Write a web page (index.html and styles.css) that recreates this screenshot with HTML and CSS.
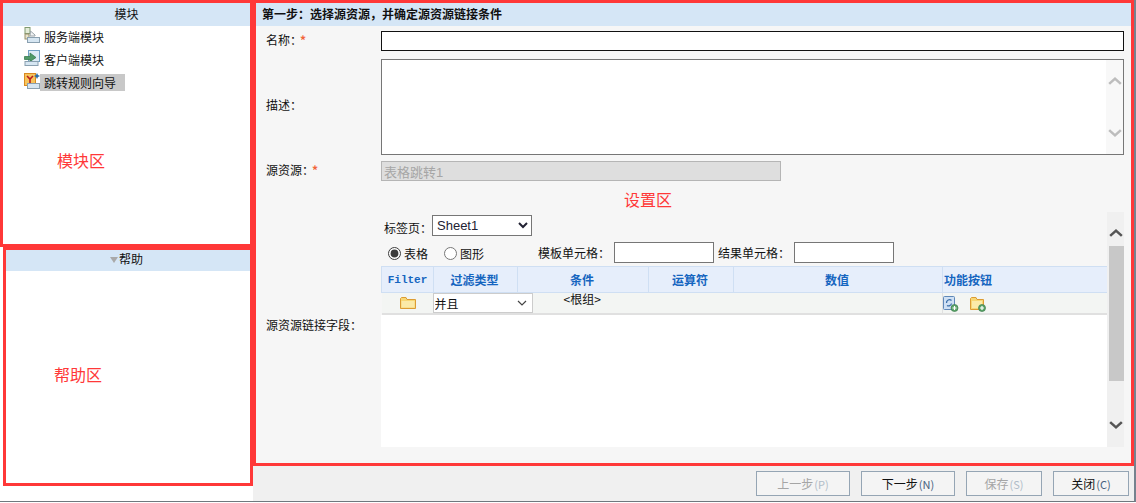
FILE: index.html
```html
<!DOCTYPE html>
<html lang="zh">
<head>
<meta charset="utf-8">
<title>跳转规则向导</title>
<link rel="stylesheet" href="styles.css">
</head>
<body>
<div class="app">
  <aside class="side">
    <section class="box module-box">
      <div class="head head-center">模块</div>
      <ul class="tree">
        <li class="tree-item">
          <svg class="tree-icon" viewBox="0 0 16 16"><rect x="1" y="0.500" width="5" height="6" fill="#e4ecd8" stroke="#7f9a70"/><rect x="1" y="7" width="4" height="5" fill="#e8e4cc" stroke="#98906a"/><path d="M6.500 4 L11 8 V9 H6Z" fill="#f1f3f4" stroke="#9aa4aa"/><rect x="3.500" y="10.500" width="12" height="5" fill="#d6e6f2" stroke="#8aa0b0"/></svg>
          <span class="tree-label">服务端模块</span>
        </li>
        <li class="tree-item">
          <svg class="tree-icon" viewBox="0 0 16 16"><rect x="4.500" y="0.500" width="11" height="11" fill="#dcebf6" stroke="#6fa0c4"/><path d="M0.500 6.500 H6 V3 L12 7.500 L6 11.500 V9.500 H0.500Z" fill="#4f9a68" stroke="#3a7c50" stroke-width="0.800"/><rect x="1" y="11.500" width="13" height="4" fill="#d6e6f2" stroke="#8aa0b0"/></svg>
          <span class="tree-label">客户端模块</span>
        </li>
        <li class="tree-item">
          <svg class="tree-icon" viewBox="0 0 16 16"><rect x="0.500" y="0.500" width="11" height="12" fill="#f6c45c" stroke="#d98a20"/><path d="M3 3 L6 6 L9 3 M6 6 V10" fill="none" stroke="#b81e1e" stroke-width="1.600"/><path d="M13 0 L14 2 L16 3 L14 4 L13 6 L12 4 L10 3 L12 2Z" fill="#2a6ea8"/><rect x="3.500" y="10.500" width="12" height="5" fill="#d6e6f2" stroke="#8aa0b0"/></svg>
          <span class="tree-label tree-label-active">跳转规则向导</span>
        </li>
      </ul>
      <div class="zone-note module-note">模块区</div>
    </section>
    <section class="box help-box">
      <div class="head head-center head-help"><span class="help-caret"></span>帮助</div>
      <div class="zone-note help-note">帮助区</div>
    </section>
  </aside>

  <div class="main">
    <section class="box main-box">
      <div class="head head-title">第一步：选择源资源，并确定源资源链接条件</div>
      <div class="form">
        <div class="row row-name">
          <label class="row-label">名称：<span class="req">*</span></label>
          <input class="field field-name" type="text">
        </div>
        <div class="row row-desc">
          <label class="row-label row-label-desc">描述：</label>
          <div class="field-area">
            <div class="area-scroll">
              <svg class="chev chev-light" viewBox="0 0 12 8"><path d="M1 6.500 L6 2 L11 6.500" fill="none" stroke="currentColor" stroke-width="2.200"/></svg>
              <svg class="chev chev-light" viewBox="0 0 12 8"><path d="M1 1.500 L6 6 L11 1.500" fill="none" stroke="currentColor" stroke-width="2.200"/></svg>
            </div>
          </div>
        </div>
        <div class="row row-source">
          <label class="row-label">源资源：<span class="req">*</span></label>
          <input class="field field-source" type="text" value="表格跳转1" disabled>
        </div>
        <div class="settings-note">设置区</div>
        <div class="row row-link">
          <label class="row-label row-label-link">源资源链接字段：</label>
          <div class="link-pane">
            <div class="link-content">
              <div class="sheet-row">
                <span class="sheet-label">标签页：</span>
                <select class="sheet-select"><option>Sheet1</option></select>
              </div>
              <div class="cell-row">
                <label class="radio radio-table"><input type="radio" name="kind" checked>表格</label>
                <label class="radio radio-chart"><input type="radio" name="kind">图形</label>
                <span class="cell-label">模板单元格：</span>
                <input class="cell-input" type="text">
                <span class="cell-label cell-label-result">结果单元格：</span>
                <input class="cell-input" type="text">
              </div>
              <table class="grid">
                <colgroup>
                  <col class="c-filter"><col class="c-type"><col class="c-cond"><col class="c-op"><col class="c-val"><col class="c-act">
                </colgroup>
                <thead>
                  <tr>
                    <th class="th-filter">Filter</th>
                    <th>过滤类型</th>
                    <th>条件</th>
                    <th>运算符</th>
                    <th>数值</th>
                    <th class="th-action">功能按钮</th>
                  </tr>
                </thead>
                <tbody>
                  <tr>
                    <td class="td-center">
                      <svg class="folder" viewBox="0 0 16 14"><path d="M0.500 2.500 V12.500 H15.500 V3.500 H7 L6 1.500 H1.500Z" fill="#f7d775" stroke="#dc9c34"/><rect x="1.500" y="5" width="13" height="6.500" fill="#fbeaa8"/></svg>
                    </td>
                    <td class="td-select"><select class="type-select"><option>并且</option></select></td>
                    <td class="td-root">&lt;根组&gt;</td>
                    <td></td>
                    <td></td>
                    <td class="td-actions">
                      <svg class="action-icon" viewBox="0 0 16 16"><rect x="0.500" y="0.500" width="11" height="13" rx="1" fill="#cfe0f4" stroke="#5f88b8"/><path d="M3.500 7 A3 3 0 0 1 8.500 4.500 M8.500 7.500 A3 3 0 0 1 4 9.500" fill="none" stroke="#3a6ea8" stroke-width="1.300"/><circle cx="11.500" cy="12" r="3.500" fill="#5aa469" stroke="#3c7c4c" stroke-width="0.700"/><path d="M9.500 12 H13.500 M11.500 10 V14" stroke="#fff" stroke-width="1.200"/></svg>
                      <svg class="action-icon" viewBox="0 0 16 16"><path d="M0.500 2.500 V13.500 H13.500 V3.500 H7 L6 1.500 H1.500Z" fill="#f7d775" stroke="#dc9c34"/><rect x="2" y="5" width="10" height="7" fill="#fbeaa8"/><circle cx="12" cy="12" r="3.500" fill="#5aa469" stroke="#3c7c4c" stroke-width="0.700"/><path d="M10 12 H14 M12 10 V14" stroke="#fff" stroke-width="1.200"/></svg>
                    </td>
                  </tr>
                </tbody>
              </table>
              <div class="grid-empty"></div>
            </div>
            <div class="pane-scroll">
              <svg class="chev chev-dark" viewBox="0 0 12 8"><path d="M1 6.500 L6 2 L11 6.500" fill="none" stroke="currentColor" stroke-width="2.200"/></svg>
              <div class="pane-thumb"></div>
              <div class="pane-rest"></div>
              <svg class="chev chev-dark" viewBox="0 0 12 8"><path d="M1 1.500 L6 6 L11 1.500" fill="none" stroke="currentColor" stroke-width="2.200"/></svg>
            </div>
          </div>
        </div>
      </div>
    </section>
    <footer class="actions">
      <button class="btn btn-wide" type="button" disabled>上一步<span class="key">(P)</span></button>
      <button class="btn btn-wide" type="button">下一步<span class="key">(N)</span></button>
      <button class="btn" type="button" disabled>保存<span class="key">(S)</span></button>
      <button class="btn" type="button">关闭<span class="key">(C)</span></button>
    </footer>
  </div>
</div>
</body>
</html>
```

FILE: styles.css
```css
* { box-sizing: border-box; }

html, body {
  margin: 0;
  padding: 0;
  background: #fff;
  overflow: hidden;
}

body {
  font-family: "Noto Sans CJK SC", "Liberation Sans", sans-serif;
  font-size: 12px;
  color: #111;
}

.app {
  display: grid;
  grid-template-columns: 253px 1fr;
  width: 1136px;
  height: 502px;
  border-right: 2px solid #76828e;
  border-bottom: 1px solid #6f787e;
}

.side {
  display: flex;
  flex-direction: column;
  height: 486px;
}

.box {
  border: 3px solid #ff3838;
  background: #fff;
}

.module-box {
  height: 247px;
}

.help-box {
  height: 239px;
  margin-left: 3px;
}

.head {
  height: 23px;
  line-height: 21px;
  background: #d5e6f6;
}

.head-center {
  text-align: center;
}

.head-help {
  height: 21px;
  line-height: 18px;
  padding-right: 3px;
}

.help-caret {
  display: inline-block;
  width: 0;
  height: 0;
  margin-right: 1px;
  border-left: 4px solid transparent;
  border-right: 4px solid transparent;
  border-top: 6px solid #a9a9a9;
  vertical-align: 1px;
}

.tree {
  list-style: none;
  margin: 0;
  padding: 0 0 0 21px;
}

.tree-item {
  display: flex;
  align-items: center;
  height: 23px;
}

.tree-icon {
  width: 16px;
  height: 16px;
  flex: none;
  margin-top: -5px;
}

.tree-label {
  margin-top: -3px;
  padding: 0 9px 0 4px;
  line-height: 17px;
}

.tree-label-active {
  background: #c8c8c8;
}

.zone-note {
  color: #ff3838;
  font-size: 16px;
  line-height: 20px;
}

.module-note {
  margin: 55px 0 0 54px;
}

.help-note {
  margin: 93px 0 0 48px;
}

.main {
  display: flex;
  flex-direction: column;
  min-width: 0;
}

.main-box {
  height: 466px;
  background: #f6f6f6;
}

.head-title {
  padding-left: 6px;
  font-weight: 700;
}

.form {
  padding: 5px 7px 0 10px;
}

.row {
  display: grid;
  grid-template-columns: 115px 1fr;
  align-items: center;
}

.row-label {
  padding-bottom: 2px;
  line-height: 16px;
}

.row-label-desc {
  padding-bottom: 4px;
}

.req {
  color: #f2643a;
  font-weight: 700;
  margin-left: -2px;
}

.field {
  display: block;
  width: 100%;
  margin: 0;
  padding: 0 2px;
  background: #fff;
  font: inherit;
}

.field-name {
  height: 20px;
  border: 1px solid #111;
}

.row-desc {
  margin-top: 8px;
}

.field-area {
  display: flex;
  justify-content: flex-end;
  height: 96px;
  background: #fff;
  border: 1px solid #767676;
}

.area-scroll {
  display: flex;
  flex-direction: column;
  justify-content: space-between;
  align-items: center;
  width: 17px;
  padding: 16px 0 16px;
  background: #f8f8f8;
}

.chev {
  display: block;
  width: 14px;
  height: 10px;
  flex: none;
}

.chev-light {
  color: #bdbdbd;
}

.chev-dark {
  color: #555;
}

.row-source {
  margin-top: 6px;
}

.field-source {
  width: 400px;
  height: 20px;
  border: 1px solid #b5b5b5;
  background: #dedede;
  color: #a6a6a6;
  font-family: "Liberation Sans", "Noto Sans CJK SC", sans-serif;
  font-size: 13px;
  opacity: 1;
}

.settings-note {
  height: 31px;
  padding: 8px 0 0 358px;
  color: #ff3838;
  font-size: 16px;
  line-height: 20px;
}

.row-label-link {
  padding-bottom: 10px;
}

.link-pane {
  display: flex;
  height: 235px;
}

.link-content {
  display: flex;
  flex-direction: column;
  width: 726px;
}

.sheet-row {
  display: flex;
  align-items: center;
  height: 26px;
  padding: 1px 0 0 3px;
}

.sheet-label {
  width: 48px;
  margin-top: 4px;
}

.sheet-select {
  width: 100px;
  height: 21px;
  margin: 0;
  padding: 0;
  background: #fff;
  border: 1px solid #767676;
  font-family: "Liberation Sans", "Noto Sans CJK SC", sans-serif;
  font-size: 13px;
  color: #223;
}

.cell-row {
  display: flex;
  align-items: center;
  height: 28px;
}

.radio {
  display: flex;
  align-items: center;
  margin-top: 2px;
}

.radio input {
  width: 13px;
  height: 13px;
  margin: 0 3px 0 0;
  accent-color: #3c3c3c;
}

.radio-table {
  margin-left: 7px;
}

.radio-chart {
  margin-left: 16px;
}

.cell-label {
  margin-left: 54px;
  width: 76px;
}

.cell-label-result {
  margin-left: 4px;
}

.cell-input {
  width: 100px;
  height: 21px;
  margin: 0;
  background: #fff;
  border: 1px solid #767676;
}

.grid {
  width: 726px;
  table-layout: fixed;
  border-collapse: collapse;
}

.c-filter { width: 52px; }
.c-type { width: 84px; }
.c-cond { width: 131px; }
.c-op { width: 85px; }
.c-val { width: 209px; }
.c-act { width: 165px; }

.grid th {
  height: 26px;
  padding: 0 2px 0 0;
  background: #e6eefb;
  border: 1px solid #cfdff3;
  color: #1565c0;
  font-weight: 700;
}

.grid .th-filter {
  font-family: "Liberation Mono", monospace;
  font-size: 11px;
  padding-left: 2px;
}

.grid .th-action {
  text-align: left;
  padding-left: 1px;
  white-space: nowrap;
}

.grid td {
  height: 21px;
  padding: 0;
  background: #f3f5f3;
  border-bottom: 2px solid #e0e0e0;
}

.grid td:last-child {
  border-right: 1px solid #e0e0e0;
}

.td-center {
  text-align: center;
}

.folder {
  display: inline-block;
  width: 16px;
  height: 14px;
  vertical-align: middle;
  margin-bottom: 3px;
}

.td-select {
  position: relative;
  z-index: 1;
  vertical-align: top;
}

.type-select {
  display: block;
  width: 100px;
  height: 20px;
  margin: 0 0 0 -1px;
  padding: 0 0 0 1px;
  appearance: none;
  background: #fff url("data:image/svg+xml,%3Csvg xmlns='http://www.w3.org/2000/svg' width='10' height='6'%3E%3Cpath d='M1 1 L5 5 L9 1' fill='none' stroke='%23444' stroke-width='1.200'/%3E%3C/svg%3E") no-repeat right 5px center;
  border: 1px solid #ccc;
  font: inherit;
  color: #111;
}

.grid .td-root {
  vertical-align: top;
  padding: 0 0 0 46px;
  line-height: 12px;
}

.grid .td-actions {
  border-left: 1px solid #e0e0e0;
  padding: 2px 0 0 0;
}

.action-icon {
  display: inline-block;
  width: 16px;
  height: 16px;
  vertical-align: top;
  margin-right: 8px;
}

.grid-empty {
  flex: 1;
  background: #fff;
}

.pane-scroll {
  display: flex;
  flex-direction: column;
  align-items: center;
  width: 17px;
  background: #f0f0f0;
}

.pane-scroll .chev:first-child {
  margin: 16px 0 8px;
}

.pane-scroll .chev:last-child {
  margin: 0 0 17px;
}

.pane-thumb {
  width: 15px;
  height: 135px;
  margin-left: 1px;
  background: #c8c8c8;
}

.pane-rest {
  flex: 1;
}

.actions {
  display: flex;
  gap: 11px;
  align-items: flex-start;
  flex: 1;
  padding: 5px 5px 0 0;
  justify-content: flex-end;
  background: #f0f0f0;
}

.btn {
  width: 76px;
  height: 25px;
  padding: 0;
  background: #f4f4f4;
  border: 1px solid #95a5b4;
  font: inherit;
  color: #111;
}

.btn-wide {
  width: 94px;
}

.btn:disabled {
  color: #a5a5a5;
}

.key {
  margin-left: 1px;
  font-size: 11px;
  color: #46627e;
}

.btn:disabled .key {
  color: #b0bcc8;
}
```
